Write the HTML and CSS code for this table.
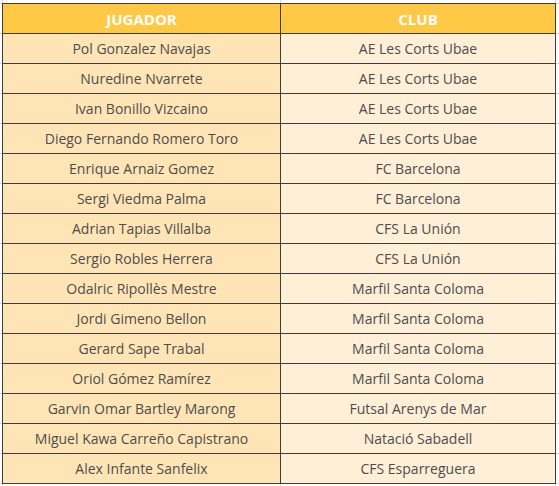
FILE: index.html
```html
<!DOCTYPE html>
<html>
<head>
<meta charset="utf-8">
<link rel="stylesheet" href="styles.css">
</head>
<body>
<div class="page">
<table class="players">
<thead>
<tr><th>JUGADOR</th><th>CLUB</th></tr>
</thead>
<tbody>
<tr><td>Pol Gonzalez Navajas</td><td>AE Les Corts Ubae</td></tr>
<tr><td>Nuredine Nvarrete</td><td>AE Les Corts Ubae</td></tr>
<tr><td>Ivan Bonillo Vizcaino</td><td>AE Les Corts Ubae</td></tr>
<tr><td>Diego Fernando Romero Toro</td><td>AE Les Corts Ubae</td></tr>
<tr><td>Enrique Arnaiz Gomez</td><td>FC Barcelona</td></tr>
<tr><td>Sergi Viedma Palma</td><td>FC Barcelona</td></tr>
<tr><td>Adrian Tapias Villalba</td><td>CFS La Unión</td></tr>
<tr><td>Sergio Robles Herrera</td><td>CFS La Unión</td></tr>
<tr><td>Odalric Ripollès Mestre</td><td>Marfil Santa Coloma</td></tr>
<tr><td>Jordi Gimeno Bellon</td><td>Marfil Santa Coloma</td></tr>
<tr><td>Gerard Sape Trabal</td><td>Marfil Santa Coloma</td></tr>
<tr><td>Oriol Gómez Ramírez</td><td>Marfil Santa Coloma</td></tr>
<tr><td>Garvin Omar Bartley Marong</td><td>Futsal Arenys de Mar</td></tr>
<tr><td>Miguel Kawa Carreño Capistrano</td><td>Natació Sabadell</td></tr>
<tr><td>Alex Infante Sanfelix</td><td>CFS Esparreguera</td></tr>
</tbody>
</table>
</div>
</body>
</html>
```
FILE: styles.css
```css
html, body {
  margin: 0;
  padding: 0;
  background: #fff;
}
.page {
  width: 559px;
  height: 486px;
  box-sizing: border-box;
  padding: 3px 0 0 2px;
  background:
    linear-gradient(#d8d8d8, #d8d8d8) 2px 0 / 1px 100% no-repeat,
    linear-gradient(#d8d8d8, #d8d8d8) 280px 0 / 1px 100% no-repeat,
    linear-gradient(#d8d8d8, #d8d8d8) 555px 0 / 1px 100% no-repeat,
    repeating-linear-gradient(to bottom, #d8d8d8 0 1px, transparent 1px 30px) 0 3px / 100% 481px no-repeat;
}
.players {
  border-collapse: collapse;
  width: 554px;
  table-layout: fixed;
  font-family: "Open Sans", sans-serif;
  font-size: 14px;
}
.players th,
.players td {
  border: 1px solid #3d3d3d;
  height: 30px;
  padding: 0;
  text-align: center;
  vertical-align: middle;
  box-sizing: border-box;
}
.players th {
  background: #ffc845;
  color: #fff;
  font-weight: bold;
  font-size: 15px;
}
.players td {
  color: #4d4d4d;
}
.players td:first-child {
  background: #ffe5b5;
}
.players td:last-child {
  background: #feefd6;
}
.players th:first-child,
.players td:first-child {
  width: 278px;
}
```
